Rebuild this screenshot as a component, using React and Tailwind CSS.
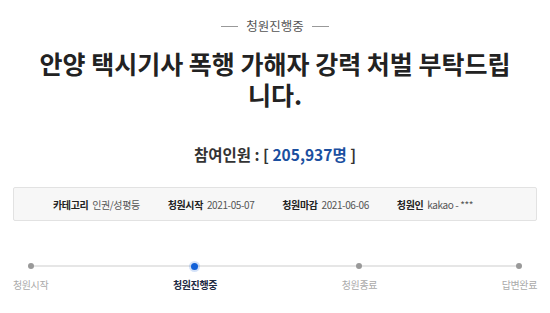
const steps = [
  { label: '청원시작', active: false },
  { label: '청원진행중', active: true },
  { label: '청원종료', active: false },
  { label: '답변완료', active: false },
];

const info = [
  { key: '카테고리', value: '인권/성평등' },
  { key: '청원시작', value: '2021-05-07' },
  { key: '청원마감', value: '2021-06-06' },
  { key: '청원인', value: 'kakao - ***' },
];

const App = () => {
  return (
    <div className="w-[550px] h-[313px] bg-white overflow-hidden font-['Noto_Sans_CJK_KR',sans-serif] text-[#222]">
      {/* status */}
      <div className="pt-[17px] flex items-center justify-center gap-[8px]">
        <span className="w-[17px] h-px bg-[#999]"></span>
        <span className="text-[12.5px] leading-[18px] text-[#555]">청원진행중</span>
        <span className="w-[17px] h-px bg-[#999]"></span>
      </div>

      {/* title */}
      <h1 className="mt-[13px] px-[30px] text-center text-[25px] leading-[31px] font-bold text-[#222]">
        안양 택시기사 폭행 가해자 강력 처벌 부탁드립니다.
      </h1>

      {/* count */}
      <div className="mt-[34px] text-center text-[15.5px] leading-[20px] font-bold text-[#333]">
        참여인원 : [ <span className="text-[#1b4fa0]">205,937명</span> ]
      </div>

      {/* info box */}
      <div className="mt-[23px] mx-[13px] h-[34px] border border-[#e2e2e2] rounded-[2px] bg-[#f7f7f7] flex items-center justify-center gap-[28px] pr-[24px] text-[10px] tracking-[-0.4px]">
        {info.map((item) => (
          <div key={item.key} className="flex items-center gap-[4px]">
            <span className="font-bold text-[#222]">{item.key}</span>
            <span className="text-[#555]">{item.value}</span>
          </div>
        ))}
      </div>

      {/* progress */}
      <div className="relative mt-[40px] px-[13px] flex justify-between">
        <div className="absolute left-[30px] right-[30px] top-[4px] h-[2px] bg-[#e6e6e6]"></div>
        {steps.map((step) => (
          <div key={step.label} className="relative flex flex-col items-center">
            <div className="h-[10px] flex items-center justify-center">
              {step.active ? (
                <span className="w-[7px] h-[7px] rounded-full bg-[#1160d8] shadow-[0_0_0_2px_rgba(17,96,216,0.18)]"></span>
              ) : (
                <span className="w-[6px] h-[6px] rounded-full bg-[#999]"></span>
              )}
            </div>
            <span
              className={
                step.active
                  ? 'mt-[7px] text-[10px] leading-[14px] tracking-[-0.4px] font-bold text-[#1e2a44]'
                  : 'mt-[7px] text-[10px] leading-[14px] tracking-[-0.4px] text-[#aaa]'
              }
            >
              {step.label}
            </span>
          </div>
        ))}
      </div>
    </div>
  );
};

export default App;
